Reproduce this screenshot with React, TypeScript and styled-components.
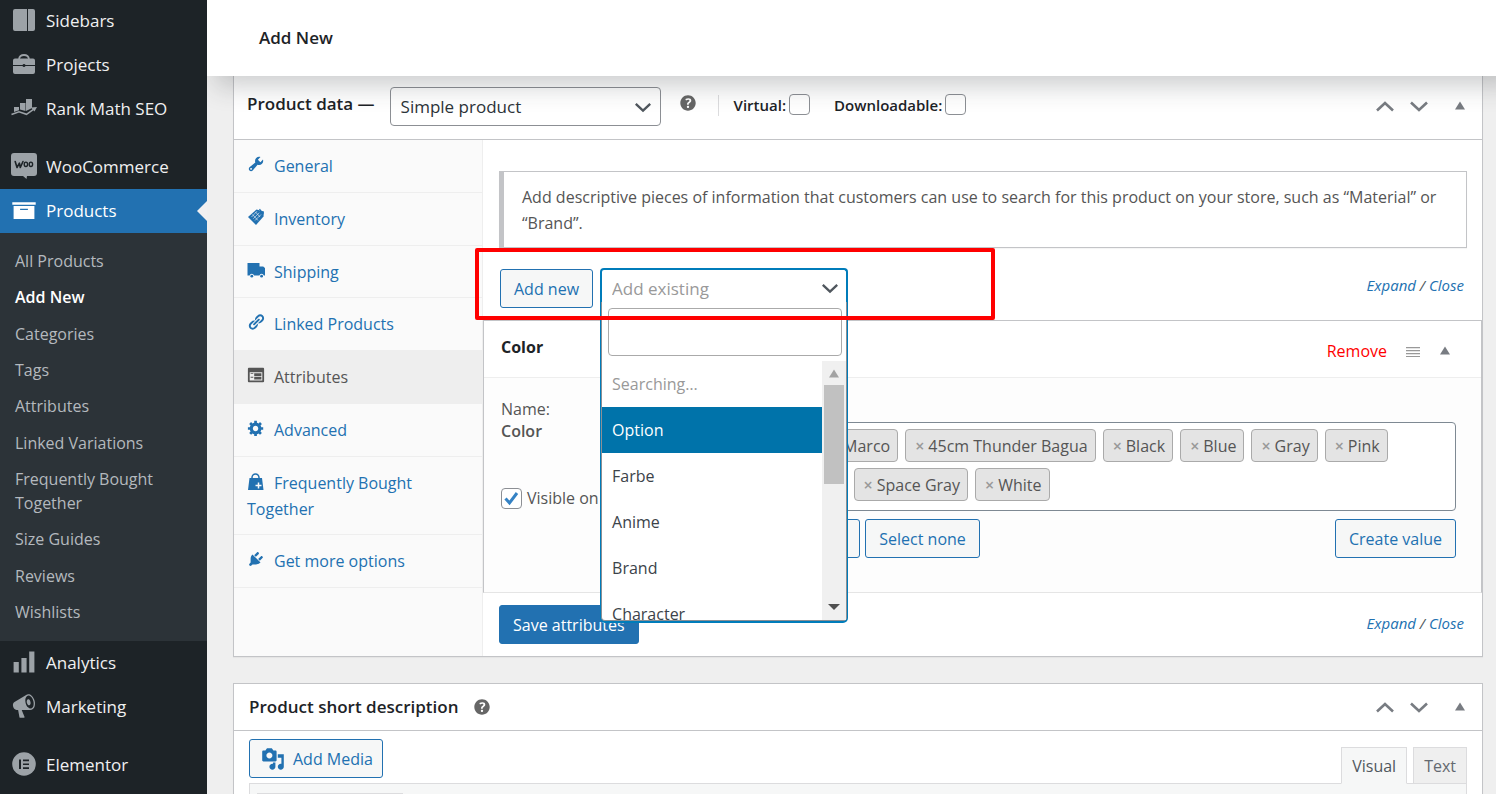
import React from 'react';
import styled, { createGlobalStyle, css } from 'styled-components';

const blue = '#2271b1';
const line = '#c3c4c7';

const GlobalStyle = createGlobalStyle`
  *, *::before, *::after { box-sizing: border-box; }
  body {
    margin: 0;
    background: #efefef;
    color: #50575e;
    font: 16px/26px "Open Sans", "Noto Sans", sans-serif;
  }
  ul, h1, h2, h3, p { margin: 0; padding: 0; list-style: none; }
  a { color: ${blue}; text-decoration: none; }
  button, input, select { font: inherit; margin: 0; }
`;

/* ---------- icons ---------- */

const paths = {
  archive: 'M19 4v2H1V4h18zM2 7h16v10H2V7zm11 3V9H7v1h6z',
  bars: 'M18 18V2h-4v16h4zm-6 0V7H8v11h4zm-6 0v-8H2v8h4z',
  megaphone:
    'M18.15 5.94c.46 1.62.38 3.22-.02 4.48-.42 1.28-1.26 2.18-2.3 2.48-.16.06-.26.06-.4.06-.06.02-.12.02-.18.02-.06.02-.14.02-.22.02h-6.8l2.22 5.5c.02.14-.06.26-.14.34-.08.1-.24.16-.34.16H6.95c-.1 0-.26-.06-.34-.16-.08-.08-.16-.2-.14-.34l-1-5.5H4.25l-.02-.02c-.5.06-1.08-.18-1.54-.62s-.88-1.08-1.06-1.88c-.24-.8-.2-1.56-.02-2.2.18-.62.58-1.08 1.06-1.3l.02-.02 9-5.4c.1-.06.18-.1.24-.16.06-.04.14-.08.24-.12.16-.08.28-.12.5-.18 1.04-.3 2.24.1 3.22.98s1.84 2.24 2.26 3.86zm-2.58 5.98h-.02c.4-.1.74-.34 1.04-.7.58-.7.86-1.76.86-3.04 0-.64-.1-1.3-.28-1.98-.34-1.36-1.02-2.5-1.78-3.24s-1.68-1.1-2.46-.88c-.82.22-1.4.96-1.7 2-.32 1.04-.28 2.36.06 3.72.38 1.36 1 2.5 1.8 3.24.78.74 1.62 1.1 2.48.88zm-2.54-7.08c.22-.04.42-.02.62.04.38.16.76.48 1.02 1s.42 1.2.42 1.78c0 .3-.04.56-.12.8-.18.48-.44.84-.86.94-.34.1-.8-.06-1.14-.4s-.64-.86-.78-1.5c-.18-.62-.12-1.24.02-1.72s.48-.84.82-.94z',
  wrench:
    'M16.68 9.77c-1.34 1.34-3.3 1.67-4.95.99l-5.41 6.52c-.99.99-2.59.99-3.58 0s-.99-2.59 0-3.57l6.52-5.42c-.68-1.65-.35-3.61.99-4.95 1.28-1.28 3.12-1.62 4.72-1.06l-2.89 2.89 2.82 2.82 2.86-2.87c.53 1.58.18 3.39-1.08 4.65zM3.81 16.21c.4.39 1.04.39 1.43 0 .4-.4.4-1.04 0-1.43-.39-.4-1.03-.4-1.43 0-.39.39-.39 1.03 0 1.43z',
  link: 'M17.74 2.76c1.68 1.69 1.68 4.41 0 6.1l-1.53 1.52c-1.12 1.12-2.7 1.47-4.14 1.09l2.62-2.61.76-.77.76-.76c.84-.84.84-2.2 0-3.04-.84-.85-2.2-.85-3.04 0l-.77.76-3.38 3.38c-.37-1.44-.02-3.02 1.1-4.14l1.52-1.53c1.69-1.68 4.42-1.68 6.1 0zM8.59 13.43l5.34-5.34c.42-.42.42-1.1 0-1.52-.44-.43-1.13-.39-1.53 0l-5.33 5.34c-.42.42-.42 1.1 0 1.52.44.43 1.13.39 1.52 0zm-.76 2.29l4.14-4.15c.38 1.44.03 3.02-1.09 4.14l-1.52 1.53c-1.69 1.68-4.41 1.68-6.1 0-1.68-1.68-1.68-4.42 0-6.1l1.53-1.52c1.12-1.12 2.7-1.47 4.14-1.1l-4.14 4.15c-.85.84-.85 2.2 0 3.05.84.84 2.2.84 3.04 0z',
  feedback:
    'M2 2h16c.55 0 1 .45 1 1v14c0 .55-.45 1-1 1H2c-.55 0-1-.45-1-1V3c0-.55.45-1 1-1zm15 14V7H3v9h14zM4 8v1h3V8H4zm4 0v3h8V8H8zm-4 4v1h3v-1H4zm4 0v3h8v-3H8z',
  gear: 'M18 12h-2.18c-.17.7-.44 1.35-.81 1.93l1.54 1.54-2.1 2.1-1.54-1.54c-.58.36-1.23.63-1.91.79V19H8v-2.18c-.68-.16-1.33-.43-1.91-.79l-1.54 1.54-2.12-2.12 1.54-1.54c-.36-.58-.63-1.23-.79-1.91H1V9.03h2.17c.16-.7.44-1.35.8-1.94L2.43 5.55l2.1-2.1 1.54 1.54c.58-.37 1.24-.64 1.93-.81V2h3v2.18c.68.16 1.33.43 1.91.79l1.54-1.54 2.12 2.12-1.54 1.54c.36.59.64 1.24.8 1.94H18V12zm-8.5 1.5c1.66 0 3-1.34 3-3s-1.34-3-3-3-3 1.34-3 3 1.34 3 3 3z',
  plug: 'M13.11 4.36L9.87 7.6 8 5.73l3.24-3.24c.35-.34 1.05-.2 1.56.32.52.51.66 1.21.31 1.55zm-8 1.77l.91-1.12 9.01 9.01-1.19.84c-.71.71-2.63 1.16-3.82 1.16H6.14L4.9 17.26c-.59.59-1.54.59-2.12 0-.59-.58-.59-1.53 0-2.12l1.24-1.24v-3.88c0-1.13.4-3.19 1.09-3.89zm7.26 3.97l3.24-3.24c.34-.35 1.04-.21 1.55.31.52.51.66 1.21.31 1.55l-3.24 3.25z',
  media:
    'M13 11V4c0-.55-.45-1-1-1h-1.67L9 1H5L3.67 3H2c-.55 0-1 .45-1 1v7c0 .55.45 1 1 1h10c.55 0 1-.45 1-1zM7 4.5c1.38 0 2.5 1.12 2.5 2.5S8.38 9.5 7 9.5 4.5 8.38 4.5 7 5.62 4.5 7 4.5zM14 6h5v10.5c0 1.38-1.12 2.5-2.5 2.5S14 17.88 14 16.5s1.12-2.5 2.5-2.5c.17 0 .34.02.5.05V9h-3V6zm-4 8.05V13h2v3.5c0 1.38-1.12 2.5-2.5 2.5S7 17.88 7 16.5 8.12 14 9.5 14c.17 0 .34.02.5.05z',
  help: 'M17 10c0-3.87-3.14-7-7-7-3.87 0-7 3.13-7 7s3.13 7 7 7c3.86 0 7-3.13 7-7zm-6.3 1.48H9.14v-.43c0-.38.08-.7.24-.98s.46-.57.88-.89c.41-.29.68-.53.81-.71.14-.18.2-.39.2-.62 0-.25-.09-.44-.28-.58-.19-.13-.45-.19-.79-.19-.58 0-1.25.19-2 .57l-.64-1.28c.87-.49 1.8-.74 2.77-.74.81 0 1.45.2 1.92.58.48.39.71.91.71 1.55 0 .43-.09.8-.29 1.11-.19.32-.57.67-1.11 1.06-.38.28-.61.49-.71.63-.1.15-.15.34-.15.57v.35zm-1.47 2.74c-.18-.17-.27-.42-.27-.73 0-.33.08-.58.26-.75s.43-.25.77-.25c.32 0 .57.09.75.26s.27.42.27.74c0 .3-.09.55-.27.72-.18.18-.43.27-.75.27-.33 0-.58-.09-.76-.26z',
};

const Svg = styled.svg`
  fill: currentColor;
  flex: none;
`;

const Dash = ({ name, size = 24 }: { name: keyof typeof paths; size?: number }) => (
  <Svg width={size} height={size} viewBox="0 0 20 20" aria-hidden="true">
    <path d={paths[name]} />
  </Svg>
);

const SidebarsIcon = () => (
  <Svg width="26" height="26" viewBox="0 0 26 26" aria-hidden="true">
    <path d="M4 2h12v22H4a2 2 0 0 1-2-2V4a2 2 0 0 1 2-2zM17 2h5a2 2 0 0 1 2 2v18a2 2 0 0 1-2 2h-5z" />
  </Svg>
);

const ProjectsIcon = () => (
  <Svg width="26" height="26" viewBox="0 0 26 26" aria-hidden="true">
    <path d="M8 8C8.500 5 10.500 4 13 4S17.500 5 18 8" fill="none" stroke="currentColor" strokeWidth="1.800" />
    <path d="M4 7.500h18a2 2 0 0 1 2 2V14h-9.500a1.600 1.600 0 0 0-3 0H2V9.500a2 2 0 0 1 2-2z" />
    <path d="M2 15h9.500a1.600 1.600 0 0 0 3 0H24v6a2 2 0 0 1-2 2H4a2 2 0 0 1-2-2z" />
  </Svg>
);

const RankIcon = () => (
  <Svg width="26" height="26" viewBox="0 0 26 26" aria-hidden="true">
    <path d="M3 12h5v3.200l-5 1.800zM9 8h5.500v8L9 14.500zM15 4h6v9l-6 3z" />
    <path d="M.5 19.500 8 16.700l7.500 2.600 7-5" fill="none" stroke="currentColor" strokeWidth="1.500" />
    <path d="m20 12.500 6-.5-2.500 4.500z" />
  </Svg>
);

const WooIcon = () => (
  <Svg width="26" height="28" viewBox="0 0 26 28" aria-hidden="true">
    <path d="M3 1h20a3 3 0 0 1 3 3v17a3 3 0 0 1-3 3h-7l-.5 3-3.500-3H3a3 3 0 0 1-3-3V4a3 3 0 0 1 3-3z" />
    <path
      d="M4.200 9.500 6 15.500l2.400-4.300.9 4.300L12 9.500"
      fill="none"
      stroke="#1d2327"
      strokeWidth="1.600"
      strokeLinejoin="round"
      strokeLinecap="round"
    />
    <ellipse cx="14.900" cy="12.300" rx="1.700" ry="2.200" fill="none" stroke="#1d2327" strokeWidth="1.400" />
    <ellipse cx="19.900" cy="12.300" rx="1.700" ry="2.200" fill="none" stroke="#1d2327" strokeWidth="1.400" />
  </Svg>
);

const ElementorIcon = () => (
  <Svg width="24" height="24" viewBox="0 0 24 24" aria-hidden="true">
    <circle cx="12" cy="12" r="11.800" />
    <path d="M7 7.500h2v9.500H7zM11 7.500h6v1.700h-6zM11 11.400h6v1.700h-6zM11 15.300h6V17h-6z" fill="#1d2327" />
  </Svg>
);

const InventoryIcon = () => (
  <Svg width="18" height="18" viewBox="0 0 18 18" aria-hidden="true">
    <path d="M9.500 1.500 17 3.500l-.5 5L9 17 1 9z" />
    <path d="M4.500 9 10 3.200M6.300 10.700l5.900-6M8 12.500l6-6M5.500 6.500l5.500 6M8.500 4l4.500 5" stroke="#fafafa" strokeWidth=".6" fill="none" />
    <path d="M12.500 1 16 6" stroke="currentColor" strokeWidth="1.300" />
  </Svg>
);

const ShippingIcon = () => (
  <Svg width="18" height="18" viewBox="0 0 18 18" aria-hidden="true">
    <path d="M.5 2h12v3.500h3.700L18 7v7.500h-1.200a2.300 2.300 0 0 0-4.400 0H7a2.300 2.300 0 0 0-4.400 0H.5z" />
    <circle cx="4.800" cy="15.200" r="1.400" />
    <circle cx="14.600" cy="15.200" r="1.400" />
  </Svg>
);

const BagIcon = () => (
  <Svg width="18" height="18" viewBox="0 0 18 18" aria-hidden="true">
    <path d="M5 7V5.500a3.500 3.500 0 0 1 7 0V7" fill="none" stroke="currentColor" strokeWidth="1.500" />
    <path d="M2.500 6h12.500L16.500 18H1z" />
    <path d="M11.500 10.500v6M8.500 13.500h6" stroke="#fafafa" strokeWidth="1.500" />
  </Svg>
);

const Chevron = ({ up = false, size = 20 }: { up?: boolean; size?: number }) => (
  <Svg width={size} height={size} viewBox="0 0 20 20" aria-hidden="true">
    <path d={up ? 'M2 14.500 10 7l8 7.500' : 'M2 6.500 10 14l8-7.500'} fill="none" stroke="currentColor" strokeWidth="2.600" />
  </Svg>
);

const Triangle = ({ down = false }: { down?: boolean }) => (
  <Svg width="12" height="10" viewBox="0 0 12 10" aria-hidden="true">
    <path d={down ? 'M0 2h12L6 8z' : 'M1 8.500h10L6 .5z'} />
  </Svg>
);

/* ---------- shell and side menu ---------- */

const Shell = styled.div`
  display: flex;
  height: 100vh;
  overflow: hidden;
`;

const Sidebar = styled.nav`
  flex: none;
  width: 207px;
  background: #1d2327;
`;

const Menu = styled.ul`
  margin-top: -1px;
`;

const MenuItem = styled.li<{ $group?: boolean }>`
  ${(p) => p.$group && css`margin-top: 14px;`}
`;

const MenuLink = styled.a<{ $active?: boolean }>`
  display: flex;
  align-items: center;
  position: relative;
  height: 44px;
  padding-left: 12px;
  color: #f0f0f1;
  font-size: 17px;
  ${(p) =>
    p.$active &&
    css`
      background: ${blue};
      color: #fff;
      &::after {
        content: '';
        position: absolute;
        right: 0;
        top: 12px;
        border: 10px solid transparent;
        border-left-width: 0;
        border-right-color: #f0f0f1;
      }
    `}
`;

const MenuIcon = styled.span<{ $active?: boolean }>`
  display: grid;
  justify-content: center;
  width: 24px;
  margin-right: 10px;
  padding-bottom: 2px;
  color: ${(p) => (p.$active ? '#fff' : '#9ca2a7')};
`;

const SubMenu = styled.ul`
  display: flex;
  flex-direction: column;
  justify-content: space-between;
  min-height: 408px;
  padding: 10px 0 11px;
  background: #2c3338;
`;

const SubLink = styled.a<{ $current?: boolean }>`
  display: block;
  padding: 6px 15px;
  line-height: 24px;
  color: ${(p) => (p.$current ? '#fff' : '#b4b9be')};
  font-weight: ${(p) => (p.$current ? 600 : 400)};
`;

const Main = styled.main`
  flex: 1;
  min-width: 0;
  overflow: hidden;
`;

const TopBar = styled.header`
  position: relative;
  z-index: 5;
  display: flex;
  align-items: center;
  height: 76px;
  margin-right: -30px;
  padding-left: 52px;
  background: #fff;
  box-shadow: 0 18px 26px -8px rgba(40, 45, 52, 0.24);
`;

const PageTitle = styled.h1`
  color: #1d2327;
  font-size: 17px;
  font-weight: 600;
`;

/* ---------- boxes ---------- */

const Box = styled.section<{ $first?: boolean }>`
  margin: ${(p) => (p.$first ? '0 13px 26px 26px' : '0 13px 0 26px')};
  border: 1px solid ${line};
  ${(p) => p.$first && css`border-top: 0;`}
  background: #fff;
  box-shadow: 0 1px 1px rgba(0, 0, 0, 0.04);
`;

const BoxHead = styled.header<{ $tall?: boolean }>`
  display: flex;
  align-items: center;
  height: ${(p) => (p.$tall ? 64 : 47)}px;
  padding: 0 16px 0 ${(p) => (p.$tall ? 13 : 15)}px;
  ${(p) => p.$tall && css`padding-bottom: 4px;`}
  border-bottom: 1px solid ${line};
`;

const BoxTitle = styled.h2<{ $raise?: boolean }>`
  ${(p) => p.$raise && css`padding-bottom: 4px;`}
  color: #1d2327;
  font-size: 17px;
  font-weight: 600;
  white-space: nowrap;
`;

const IconButton = styled.button`
  display: grid;
  place-items: center;
  padding: 0;
  border: 0;
  background: none;
  color: #787c82;
`;

const Handles = styled.div`
  display: flex;
  align-items: center;
  gap: 14px;
  margin-left: auto;
  & > :last-child { margin-left: 11px; }
`;

const HelpTip = styled.span<{ $raise?: boolean }>`
  display: grid;
  margin-left: ${(p) => (p.$raise ? 16 : 13)}px;
  ${(p) => p.$raise && css`padding-bottom: 5px;`}
  color: #666;
`;

const SelectWrap = styled.span`
  position: relative;
  display: block;
  & > svg {
    position: absolute;
    right: 9px;
    top: 11px;
    color: #50575e;
    pointer-events: none;
  }
`;

const TypeSelect = styled.select`
  display: block;
  appearance: none;
  width: 271px;
  height: 39px;
  padding: 0 10px;
  border: 1px solid #8c8f94;
  border-radius: 4px;
  background: #fff;
  color: #2c3338;
  font-size: 17px;
  font-weight: 500;
`;

const TypeField = styled.div`
  margin-left: 15px;
  padding-top: 2px;
`;

const Flags = styled.div`
  display: flex;
  gap: 24px;
  margin-left: 15px;
  padding-bottom: 2px;
`;

const Divider = styled.span`
  width: 1px;
  height: 21px;
  margin-left: 19px;
  background: #dcdcde;
`;

const Flag = styled.label`
  display: flex;
  align-items: center;
  gap: 3px;
  color: #1d2327;
  font-size: 15px;
  font-weight: 600;
`;

const Check = styled.input`
  appearance: none;
  display: block;
  width: 21px;
  height: 21px;
  border: 1px solid #8c8f94;
  border-radius: 4px;
  background: #fff;
`;

const Columns = styled.div`
  display: flex;
`;

const Tabs = styled.nav`
  flex: none;
  width: 249px;
  border-right: 1px solid #eee;
  background: #fafafa;
`;

const TabList = styled.ul`
  display: flex;
  flex-direction: column;
  min-height: 448px;
`;

const Tab = styled.li<{ $active?: boolean }>`
  flex-grow: 1;
  padding: 13px 20px 12px 13px;
  border-bottom: 1px solid #eee;
  background: ${(p) => (p.$active ? '#eee' : 'transparent')};
  a { color: ${(p) => (p.$active ? '#555' : blue)}; }
  svg { margin-right: 9px; vertical-align: -1px; }
`;

const Panel = styled.div`
  flex: 1;
  min-width: 0;
  padding-top: 31px;
`;

const Notice = styled.p`
  margin: 0 15px 0 16px;
  padding: 12px 20px 11px 18px;
  border: 1px solid ${line};
  border-left-width: 5px;
  box-shadow: 0 1px 1px rgba(0, 0, 0, 0.04);
  color: #555;
`;

const Toolbar = styled.div<{ $foot?: boolean }>`
  position: relative;
  display: flex;
  align-items: center;
  height: ${(p) => (p.$foot ? 63 : 72)}px;
  padding: 0 18px 0 ${(p) => (p.$foot ? 16 : 17)}px;
  ${(p) => !p.$foot && css`padding-top: 9px;`}
`;

const Button = styled.button<{ $primary?: boolean }>`
  display: inline-flex;
  align-items: center;
  gap: 8px;
  height: 39px;
  padding: 0 13px;
  border: 1px solid ${blue};
  border-radius: 3px;
  background: ${(p) => (p.$primary ? blue : '#f6f7f7')};
  color: ${(p) => (p.$primary ? '#fff' : blue)};
  white-space: nowrap;
`;

const Links = styled.span<{ $raise?: boolean }>`
  margin-left: auto;
  padding-bottom: ${(p) => (p.$raise ? 8 : 4)}px;
  font-size: 15px;
  font-style: italic;
`;

const Combo = styled.div`
  position: relative;
  z-index: 2;
  width: 248px;
  margin-left: 7px;
  padding-bottom: 2px;
`;

const ComboSelect = styled.select`
  display: block;
  appearance: none;
  width: 100%;
  height: 40px;
  padding: 0 10px;
  border: 2px solid #007cba;
  border-bottom: 0;
  border-radius: 4px 4px 0 0;
  background: #fff;
  color: #999;
  font-size: 17px;
`;

const DropDown = styled.div`
  position: absolute;
  top: 34px;
  left: 1px;
  right: 1px;
  border: 1px solid #8c8f94;
  border-top: 0;
  border-radius: 0 0 4px 4px;
  background: #fff;
  box-shadow: 0 1px 0 1px #007cba;
  clip-path: inset(0 -3px -4px -3px);
`;

const Search = styled.input`
  display: block;
  width: calc(100% - 10px);
  height: 48px;
  margin: 6px 4px 5px 6px;
  border: 1px solid #aaa;
  border-radius: 4px;
`;

const Results = styled.div`
  display: flex;
  height: 259px;
  overflow: hidden;
`;

const Options = styled.ul`
  flex: 1;
`;

const Option = styled.li<{ $state?: 'hover' | 'muted' }>`
  padding: 10px;
  background: ${(p) => (p.$state === 'hover' ? '#0073aa' : 'transparent')};
  color: ${(p) => (p.$state === 'hover' ? '#fff' : p.$state === 'muted' ? '#999' : '#3c434a')};
`;

const ScrollTrack = styled.div`
  display: flex;
  flex-direction: column;
  align-items: center;
  width: 24px;
  padding: 8px 0;
  background: #f0f0f0;
  color: #a3a3a3;
  & > :last-child { margin-top: auto; color: #505050; }
`;

const ScrollThumb = styled.div`
  width: 20px;
  height: 99px;
  margin-top: 6px;
  background: #c1c1c1;
`;

const Highlight = styled.div`
  position: absolute;
  z-index: 3;
  left: -8px;
  top: 0;
  width: 520px;
  height: 72px;
  border: 4px solid #f00;
  border-radius: 2px;
  pointer-events: none;
`;

/* ---------- attribute ---------- */

const Attribute = styled.div`
  border: 1px solid ${line};
  border-bottom-color: #e5e5e5;
  background: #fdfdfd;
`;

const AttributeHead = styled.header`
  display: flex;
  align-items: center;
  gap: 19px;
  height: 57px;
  padding: 4px 30px 0 17px;
  border-bottom: 1px solid #eee;
  background: #fff;
`;

const AttributeName = styled.h3`
  margin-right: auto;
  padding-bottom: 8px;
  color: #1d2327;
  font-size: 16px;
  font-weight: 700;
`;

const RemoveLink = styled.a`
  color: #f00;
`;

const AttributeBody = styled.div`
  display: flex;
  padding: 20px 25px 34px 17px;
  line-height: 22px;
  color: #555;
`;

const NameColumn = styled.div`
  flex: none;
  width: 266px;
`;

const ValueColumn = styled.div`
  flex: 1;
  min-width: 0;
`;

const Strong = styled.strong`
  display: block;
  font-weight: 600;
`;

const Visible = styled.label`
  display: flex;
  align-items: center;
  gap: 5px;
  margin-top: 45px;
  white-space: nowrap;
`;

const CheckWrap = styled.span`
  display: grid;
  & > * { grid-area: 1 / 1; }
  svg { place-self: center; color: #3582c4; pointer-events: none; }
`;

const Values = styled.ul`
  display: flex;
  flex-wrap: wrap;
  align-content: flex-start;
  gap: 6px 7px;
  min-height: 89px;
  margin: 2px 0 8px;
  padding: 6px 60px 6px 7px;
  border: 1px solid #7e8993;
  border-radius: 4px;
  background: #fff;
`;

const Value = styled.li`
  display: flex;
  align-items: center;
  gap: 4px;
  height: 33px;
  padding: 0 7px 0 9px;
  border: 1px solid #aaa;
  border-radius: 4px;
  background: #e4e4e4;
  white-space: nowrap;
  button {
    padding: 0;
    border: 0;
    background: none;
    color: #999;
    font-weight: 600;
  }
`;

const ButtonRow = styled.div`
  display: flex;
  gap: 5px;
  & > :last-child { margin-left: auto; }
`;

/* ---------- short description ---------- */

const EditorHead = styled.div`
  display: flex;
  align-items: flex-end;
  justify-content: space-between;
  height: 52px;
  padding: 0 15px;
`;

const MediaSlot = styled.div`
  align-self: flex-start;
  padding-top: 8px;
  button { padding: 0 9px 0 11px; }
`;

const ModeTabs = styled.div`
  display: flex;
  gap: 6px;
`;

const ModeTab = styled.button<{ $active?: boolean }>`
  position: relative;
  z-index: ${(p) => (p.$active ? 1 : 0)};
  height: 37px;
  margin-bottom: -1px;
  padding: 0 10px;
  border: 1px solid #dcdcde;
  border-bottom-color: ${(p) => (p.$active ? '#f6f7f7' : '#dcdcde')};
  background: ${(p) => (p.$active ? '#f6f7f7' : '#efefef')};
  color: ${(p) => (p.$active ? '#50575e' : '#646970')};
`;

const Editor = styled.div`
  height: 300px;
  margin: 0 15px;
  padding: 9px 7px;
  border: 1px solid #dcdcde;
  background: #f6f7f7;
`;

const FormatSelect = styled.select`
  appearance: none;
  display: block;
  width: 146px;
  height: 36px;
  border: 1px solid #dcdcde;
  background: #fff;
`;

const MoveHandles = () => (
  <Handles>
    <IconButton aria-label="Move up"><Chevron up /></IconButton>
    <IconButton aria-label="Move down"><Chevron /></IconButton>
    <IconButton aria-label="Toggle panel"><Triangle /></IconButton>
  </Handles>
);

const ExpandClose = ({ raise = false }: { raise?: boolean }) => (
  <Links $raise={raise}>
    <a href="#expand">Expand</a> / <a href="#close">Close</a>
  </Links>
);

const subItems = [
  'All Products', 'Add New', 'Categories', 'Tags', 'Attributes', 'Linked Variations',
  'Frequently Bought Together', 'Size Guides', 'Reviews', 'Wishlists',
];

const menu: { label: string; icon: React.ReactNode; group?: boolean; active?: boolean }[] = [
  { label: 'Sidebars', icon: <SidebarsIcon /> },
  { label: 'Projects', icon: <ProjectsIcon /> },
  { label: 'Rank Math SEO', icon: <RankIcon /> },
  { label: 'WooCommerce', icon: <WooIcon />, group: true },
  { label: 'Products', icon: <Dash name="archive" size={26} />, active: true },
  { label: 'Analytics', icon: <Dash name="bars" size={26} /> },
  { label: 'Marketing', icon: <Dash name="megaphone" size={26} /> },
  { label: 'Elementor', icon: <ElementorIcon />, group: true },
];

const tabs = [
  { label: 'General', icon: <Dash name="wrench" size={18} /> },
  { label: 'Inventory', icon: <InventoryIcon /> },
  { label: 'Shipping', icon: <ShippingIcon /> },
  { label: 'Linked Products', icon: <Dash name="link" size={18} /> },
  { label: 'Attributes', icon: <Dash name="feedback" size={18} />, active: true },
  { label: 'Advanced', icon: <Dash name="gear" size={18} /> },
  { label: 'Frequently Bought Together', icon: <BagIcon /> },
  { label: 'Get more options', icon: <Dash name="plug" size={18} /> },
];

const values = ['45cm Marco', '45cm Thunder Bagua', 'Black', 'Blue', 'Gray', 'Pink', 'Silver', 'Space Gray', 'White'];

export default function App() {
  return (
    <Shell>
      <GlobalStyle />
      <Sidebar>
        <Menu>
          {menu.map((m) => (
            <MenuItem key={m.label} $group={m.group}>
              <MenuLink href="#" $active={m.active}>
                <MenuIcon $active={m.active}>{m.icon}</MenuIcon>
                {m.label}
              </MenuLink>
              {m.active && (
                <SubMenu>
                  {subItems.map((s) => (
                    <li key={s}><SubLink href="#" $current={s === 'Add New'}>{s}</SubLink></li>
                  ))}
                </SubMenu>
              )}
            </MenuItem>
          ))}
        </Menu>
      </Sidebar>

      <Main>
        <TopBar><PageTitle>Add New</PageTitle></TopBar>

        <Box $first>
          <BoxHead $tall>
            <BoxTitle $raise>Product data —</BoxTitle>
            <TypeField>
              <SelectWrap>
                <TypeSelect aria-label="Product type"><option>Simple product</option></TypeSelect>
                <Chevron size={18} />
              </SelectWrap>
            </TypeField>
            <HelpTip $raise><Dash name="help" size={22} /></HelpTip>
            <Divider />
            <Flags>
              <Flag>Virtual:<Check type="checkbox" /></Flag>
              <Flag>Downloadable:<Check type="checkbox" /></Flag>
            </Flags>
            <MoveHandles />
          </BoxHead>

          <Columns>
            <Tabs>
              <TabList>
                {tabs.map((t) => (
                  <Tab key={t.label} $active={t.active}>
                    <a href="#">{t.icon}{t.label}</a>
                  </Tab>
                ))}
              </TabList>
            </Tabs>

            <Panel>
              <Notice>
                Add descriptive pieces of information that customers can use to search for this product on your store,
                such as “Material” or “Brand”.
              </Notice>

              <Toolbar>
                <Button>Add new</Button>
                <Combo>
                  <SelectWrap>
                    <ComboSelect aria-label="Add existing attribute"><option>Add existing</option></ComboSelect>
                    <Chevron size={18} />
                  </SelectWrap>
                  <DropDown>
                    <Search type="text" aria-label="Search attributes" />
                    <Results>
                      <Options>
                        <Option $state="muted">Searching…</Option>
                        <Option $state="hover">Option</Option>
                        <Option>Farbe</Option>
                        <Option>Anime</Option>
                        <Option>Brand</Option>
                        <Option>Character</Option>
                      </Options>
                      <ScrollTrack>
                        <Triangle />
                        <ScrollThumb />
                        <Triangle down />
                      </ScrollTrack>
                    </Results>
                  </DropDown>
                </Combo>
                <ExpandClose raise />
                <Highlight />
              </Toolbar>

              <Attribute>
                <AttributeHead>
                  <AttributeName>Color</AttributeName>
                  <RemoveLink href="#">Remove</RemoveLink>
                  <Svg width="14" height="12" viewBox="0 0 14 12" color="#999" aria-hidden="true">
                    <path d="M0 2h14v1.200H0zM0 5h14v1.200H0zM0 8h14v1.200H0zM0 11h14v1H0z" />
                  </Svg>
                  <IconButton aria-label="Toggle attribute"><Triangle /></IconButton>
                </AttributeHead>
                <AttributeBody>
                  <NameColumn>
                    Name:
                    <Strong>Color</Strong>
                    <Visible>
                      <CheckWrap>
                        <Check type="checkbox" defaultChecked />
                        <svg width="17" height="17" viewBox="0 0 17 17" aria-hidden="true">
                          <path d="m2.500 8.500 4 4.500 7.500-10" fill="none" stroke="currentColor" strokeWidth="3" />
                        </svg>
                      </CheckWrap>
                      Visible on the product page
                    </Visible>
                  </NameColumn>
                  <ValueColumn>
                    Value(s):
                    <Values>
                      {values.map((v) => (
                        <Value key={v}><button aria-label={`Remove ${v}`}>×</button>{v}</Value>
                      ))}
                    </Values>
                    <ButtonRow>
                      <Button>Select all</Button>
                      <Button>Select none</Button>
                      <Button>Create value</Button>
                    </ButtonRow>
                  </ValueColumn>
                </AttributeBody>
              </Attribute>

              <Toolbar $foot>
                <Button $primary>Save attributes</Button>
                <ExpandClose />
              </Toolbar>
            </Panel>
          </Columns>
        </Box>

        <Box>
          <BoxHead>
            <BoxTitle>Product short description</BoxTitle>
            <HelpTip><Dash name="help" size={22} /></HelpTip>
            <MoveHandles />
          </BoxHead>
          <EditorHead>
            <MediaSlot><Button><Dash name="media" />Add Media</Button></MediaSlot>
            <ModeTabs>
              <ModeTab $active>Visual</ModeTab>
              <ModeTab>Text</ModeTab>
            </ModeTabs>
          </EditorHead>
          <Editor>
            <FormatSelect aria-label="Format"><option>Paragraph</option></FormatSelect>
          </Editor>
        </Box>
      </Main>
    </Shell>
  );
}
